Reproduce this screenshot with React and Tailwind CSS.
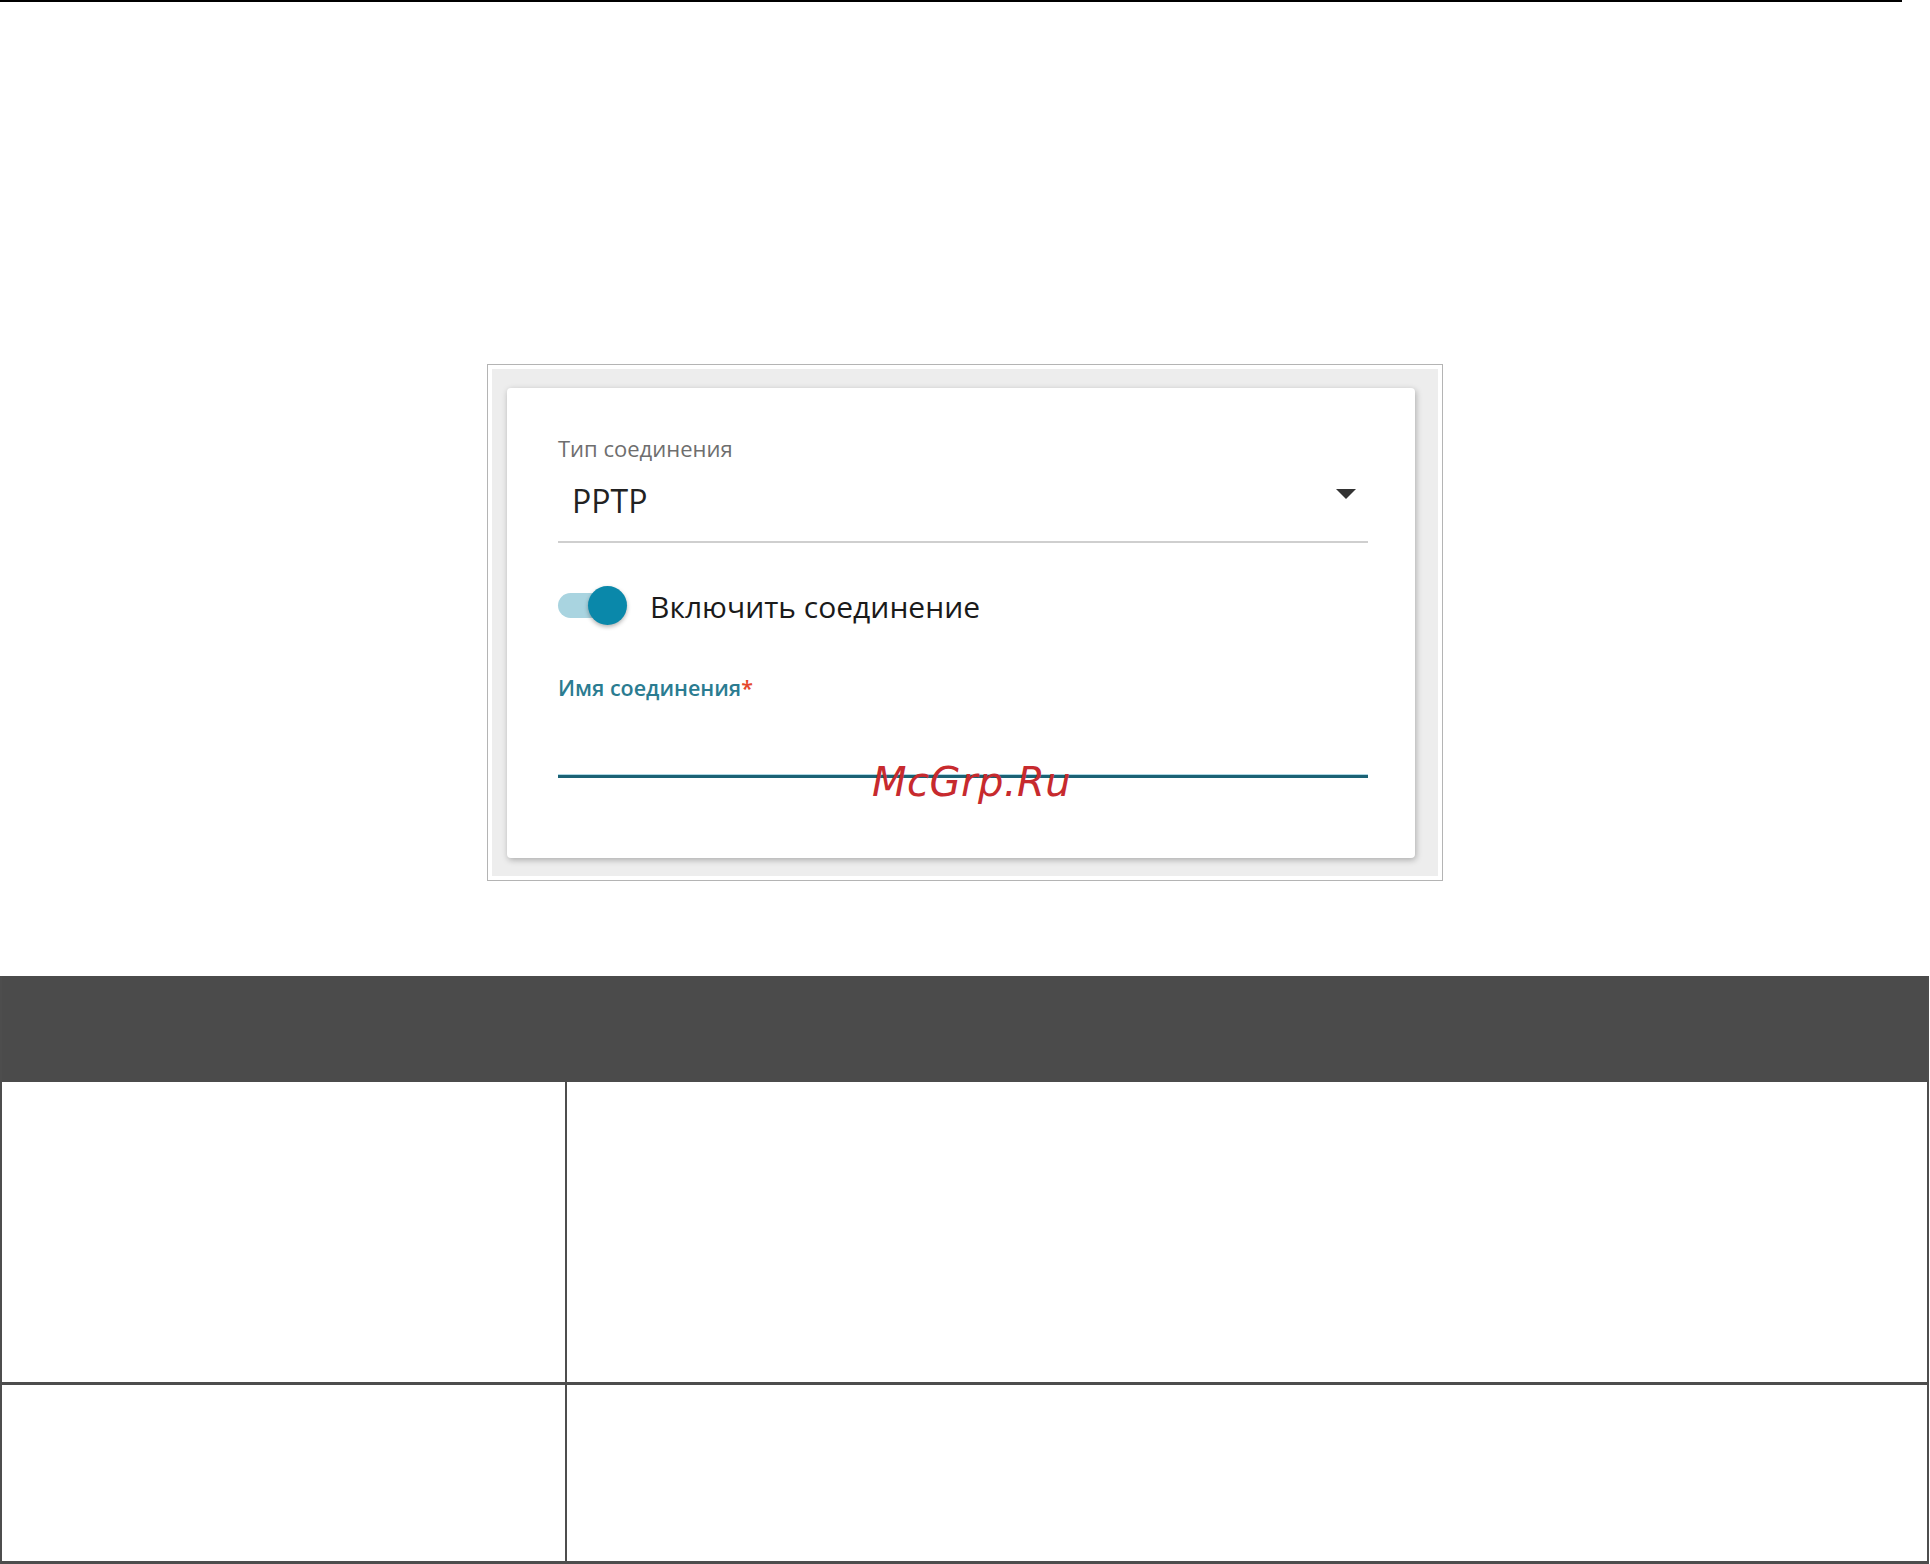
export default function App() {
  return (
    <div className="relative w-[1930px] h-[1564px] bg-white overflow-hidden flex flex-col" style={{ fontFamily: '"Open Sans", "Noto Sans", sans-serif' }}>
      <div className="h-[2px] w-[1902px] bg-black shrink-0" />

      <div className="mt-[362px] ml-[487px] w-[956px] h-[517px] border border-[#b4b4b4] p-[4px] bg-white shrink-0">
        <div className="w-full h-full bg-[#ededed] pt-[19px] pl-[15px]">
          <div className="w-[908px] h-[470px] bg-white rounded-[4px] shadow-[1px_2px_6px_rgba(0,0,0,0.28)] pl-[51px] pt-[46px] flex flex-col">
            <div className="w-[810px] flex flex-col">
              <div className="text-[22px] leading-[28px] text-[#6e6e6e]">Тип соединения</div>
              <div className="mt-[18px] h-[61px] flex items-start pl-[14px] pr-[12px]">
                <span className="text-[32px] leading-[42px] text-[#222222]">PPTP</span>
                <svg className="ml-auto mt-[9px]" width="20" height="10" viewBox="0 0 20 10">
                  <path d="M0 0 L20 0 L10 10 Z" fill="#333333" />
                </svg>
              </div>
              <div className="h-[2px] bg-[#cfcfcf]" />
            </div>

            <div className="mt-[42px] flex items-center h-[39px]">
              <div className="relative w-[70px] h-[39px]">
                <div className="absolute left-0 top-[8px] w-[62px] h-[25px] rounded-full bg-[#a9d4e0]" />
                <div className="absolute right-[1px] top-[1px] w-[39px] h-[39px] rounded-full bg-[#0a88aa] shadow-[0_2px_4px_rgba(0,0,0,0.3)]" />
              </div>
              <span className="ml-[22px] mt-[3px] text-[30px] leading-[39px] font-medium text-[#1a1a1a]">Включить соединение</span>
            </div>

            <div className="mt-[50px] text-[21.5px] leading-[28px] font-semibold text-[#2b7c91]">
              Имя соединения<span className="text-[#e5482c]">*</span>
            </div>
            <div className="mt-[73px] w-[810px] h-[3px] bg-[#1b6275] shadow-[0_-1px_0_rgba(120,190,210,0.6)]" />
          </div>
        </div>
      </div>

      <div className="mt-[95px] w-[1929px] flex flex-col border-x-2 border-[#4d4d4d] shrink-0">
        <div className="h-[106px] bg-[#4b4b4b]" />
        <div className="h-[303px] grid grid-cols-[565px_1fr] border-b-[3px] border-[#4d4d4d]">
          <div className="border-r-2 border-[#4d4d4d]" />
          <div />
        </div>
        <div className="h-[179px] grid grid-cols-[565px_1fr] border-b-[3px] border-[#4d4d4d]">
          <div className="border-r-2 border-[#4d4d4d]" />
          <div />
        </div>
      </div>

      <div className="absolute left-[872px] top-[762px] text-[40px] leading-[40px] tracking-[0.5px] italic text-[#c72a2e]" style={{ fontFamily: '"DejaVu Sans", sans-serif' }}>
        McGrp.Ru
      </div>
    </div>
  );
}
